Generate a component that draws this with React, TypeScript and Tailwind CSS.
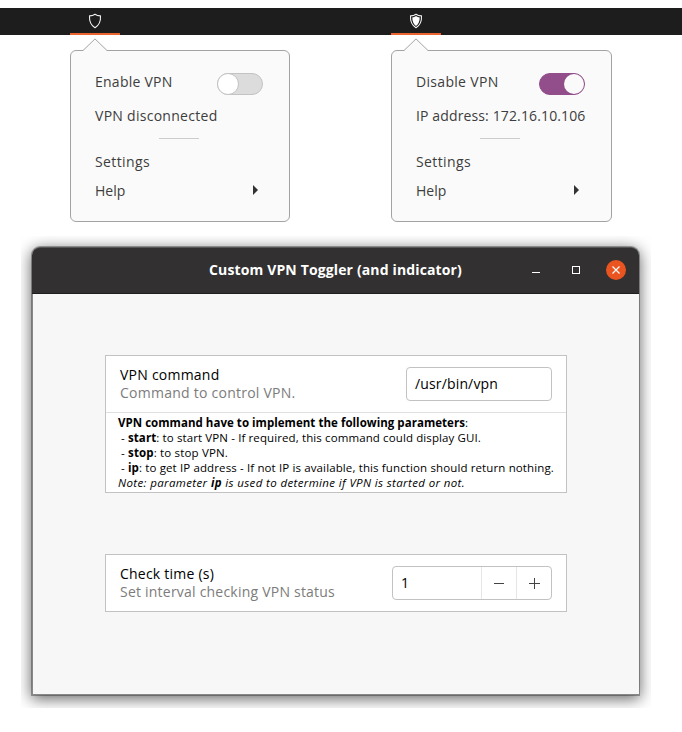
import { ReactNode, useLayoutEffect, useRef, useState } from "react";

/** Single line of text whose tracking is adjusted so that it spans `width` pixels. */
function Line({ width, className = "", children }: { width: number; className?: string; children: ReactNode }) {
  const ref = useRef<HTMLSpanElement>(null);
  const [tracking, setTracking] = useState(0);
  useLayoutEffect(() => {
    const el = ref.current;
    if (!el) return;
    const count = Math.max(1, (el.textContent ?? "").length);
    setTracking((width - el.getBoundingClientRect().width) / count);
  }, [width]);
  return (
    <div className={`whitespace-pre ${className}`}>
      <span ref={ref} style={{ letterSpacing: `${tracking}px` }}>
        {children}
      </span>
    </div>
  );
}

function Shield({ filled }: { filled?: boolean }) {
  return (
    <svg width="14" height="16" viewBox="0 0 14 16" fill="none">
      <path
        d="M7 1.2C5.6 2.3 3.4 2.9 1.5 2.9C1.2 8.2 2.8 12.3 7 14.8C11.2 12.3 12.8 8.2 12.5 2.9C10.6 2.9 8.4 2.3 7 1.2Z"
        stroke="#f2f2f2"
        strokeWidth="1.1"
        strokeLinejoin="round"
      />
      {filled && (
        <path d="M7 3C5.9 3.8 4.7 4.2 3.3 4.4C3.3 8.2 4.5 11.1 7 12.9C9.5 11.1 10.7 8.2 10.7 4.4C9.3 4.2 8.1 3.8 7 3Z" fill="#ffffff" />
      )}
    </svg>
  );
}

function Tray({ active }: { active?: boolean }) {
  return (
    <div className="flex h-[27px] w-[50px] flex-col items-center justify-between border-b-2 border-[#e9642f] pt-[5px]">
      <Shield filled={active} />
    </div>
  );
}

function Switch({ on }: { on?: boolean }) {
  return on ? (
    <div className="flex h-[22px] w-[46px] justify-end rounded-full border border-[#924d8b] bg-[#924d8b]">
      <div className="size-5 rounded-full bg-[#fafafa]" />
    </div>
  ) : (
    <div className="flex h-[22px] w-[46px] rounded-full border border-[#c3c3c3] bg-[#dcdcdc]">
      <div className="-my-px -ml-px size-[22px] rounded-full border border-[#c3c3c3] bg-white" />
    </div>
  );
}

function Popup({ on }: { on?: boolean }) {
  return (
    <div
      className={`relative h-[172px] rounded-[6px] border border-[#a3a3a3] bg-[#fafafa] pl-6 pt-[21px] text-[14px] leading-5 text-[#3d3d3d] ${
        on ? "w-[221px]" : "w-[220px]"
      }`}
    >
      <svg className="absolute -top-[13px] left-[11px]" width="26" height="14" viewBox="0 0 26 14">
        <path d="M0.5 14V12.8L13 0.8L25.5 12.8V14Z" fill="#fafafa" />
        <path d="M0 12.5H1L13 0.9L25 12.5H26" fill="none" stroke="#a3a3a3" />
      </svg>
      <div className="flex justify-between pr-[26px]">
        <Line width={on ? 82.5 : 77.5}>{on ? "Disable VPN" : "Enable VPN"}</Line>
        <div className="pt-px">
          <Switch on={on} />
        </div>
      </div>
      <Line width={on ? 169.5 : 122.5} className="mt-[11px]">
        {on ? "IP address: 172.16.10.106" : "VPN disconnected"}
      </Line>
      <div className="ml-16 mt-3 h-px w-10 bg-[#cccccc]" />
      <Line width={55} className="mt-[13px]">Settings</Line>
      <div className={`mt-[9px] flex items-center justify-between ${on ? "pr-8" : "pr-[31px]"}`}>
        <Line width={30.5}>Help</Line>
        <svg width="5" height="10" viewBox="0 0 5 10" className="-mt-0.5">
          <path d="M0 0L5 5L0 10Z" fill="#333333" />
        </svg>
      </div>
    </div>
  );
}

export default function App() {
  return (
    <div className="h-[732px] w-[682px] overflow-hidden bg-white pt-2 font-['Open_Sans','Noto_Sans',sans-serif]">
      <div className="flex h-[27px] bg-[#1d1d1d] pl-[70px]">
        <Tray />
        <div className="w-[271px]" />
        <Tray active />
      </div>
      <div className="mt-[15px] flex gap-[101px] pl-[70px]">
        <Popup />
        <Popup on />
      </div>

      <div className="ml-[21px] mt-[14px] h-[472px] w-[630px] overflow-hidden pl-[11px] pt-[11px]">
        <div className="h-[448px] w-[607px] rounded-t-[8px] shadow-[0_0_0_1px_rgba(0,0,0,0.3),0_3px_15px_1px_rgba(0,0,0,0.6)]">
          <div className="flex h-[47px] items-center rounded-t-[8px] border-b border-t border-b-[#1f1d1d] border-t-[#575555] bg-[#333031] pb-px pl-[177px] text-white">
            <Line width={253} className="-mt-px w-[254px] text-[14px] font-bold leading-5">Custom VPN Toggler (and indicator)</Line>
            <div className="ml-[69px] mt-[5px] h-px w-2 bg-white" />
            <div className="ml-8 size-2 border border-white" />
            <div className="ml-[26px] flex size-5 items-center justify-center rounded-full bg-[#e95420]">
              <svg width="8" height="8" viewBox="0 0 8 8">
                <path d="M0.5 0.5L7.5 7.5M7.5 0.5L0.5 7.5" stroke="#fff" strokeWidth="1.2" />
              </svg>
            </div>
          </div>
          <div className="h-[401px] border-b border-l border-[#888888] bg-[#f7f7f7] pl-[72px] pt-[61px]">
            <div className="h-[138px] w-[462px] border border-[#c2c2c2] bg-white">
              <div className="flex h-[57px] items-center justify-between border-b border-[#e0e0e0] px-[14px] text-[14px] leading-[18px]">
                <div>
                  <Line width={99.5} className="text-black">VPN command</Line>
                  <Line width={175.5} className="text-[#7c7c7c]">Command to control VPN.</Line>
                </div>
                <div className="flex h-[34px] w-[146px] items-center rounded-[4px] border border-[#c2c2c2] pl-2 text-black">
                  <Line width={83}>/usr/bin/vpn</Line>
                </div>
              </div>
              <div className="pl-3 pt-[2px] text-[11.5px] leading-[15px] text-black">
                <Line width={350}><b>VPN command have to implement the following parameters</b>:</Line>
                <Line width={360} className="pl-[3px]">- <b>start</b>: to start VPN - If required, this command could display GUI.</Line>
                <Line width={107} className="pl-[3px]">- <b>stop</b>: to stop VPN.</Line>
                <Line width={433} className="pl-[3px]">- <b>ip</b>: to get IP address - If not IP is available, this function should return nothing.</Line>
                <Line width={347} className="italic">Note: parameter <b>ip</b> is used to determine if VPN is started or not.</Line>
              </div>
            </div>
            <div className="mt-[61px] flex h-[58px] w-[462px] items-center justify-between border border-[#c2c2c2] bg-white px-[14px] text-[14px] leading-[18px]">
              <div>
                <Line width={94} className="text-black">Check time (s)</Line>
                <Line width={215} className="text-[#7c7c7c]">Set interval checking VPN status</Line>
              </div>
              <div className="flex h-[34px] w-[160px] rounded-[4px] border border-[#c2c2c2] text-black">
                <div className="flex w-[88px] items-center pl-2">1</div>
                <div className="flex w-[35px] items-center justify-center border-l border-[#e6e6e6]">
                  <div className="h-px w-[10px] bg-[#444444]" />
                </div>
                <div className="flex w-[35px] items-center justify-center border-l border-[#e6e6e6]">
                  <svg width="11" height="11" viewBox="0 0 11 11">
                    <path d="M0 5.5H11M5.5 0V11" stroke="#444444" />
                  </svg>
                </div>
              </div>
            </div>
          </div>
        </div>
      </div>
    </div>
  );
}
